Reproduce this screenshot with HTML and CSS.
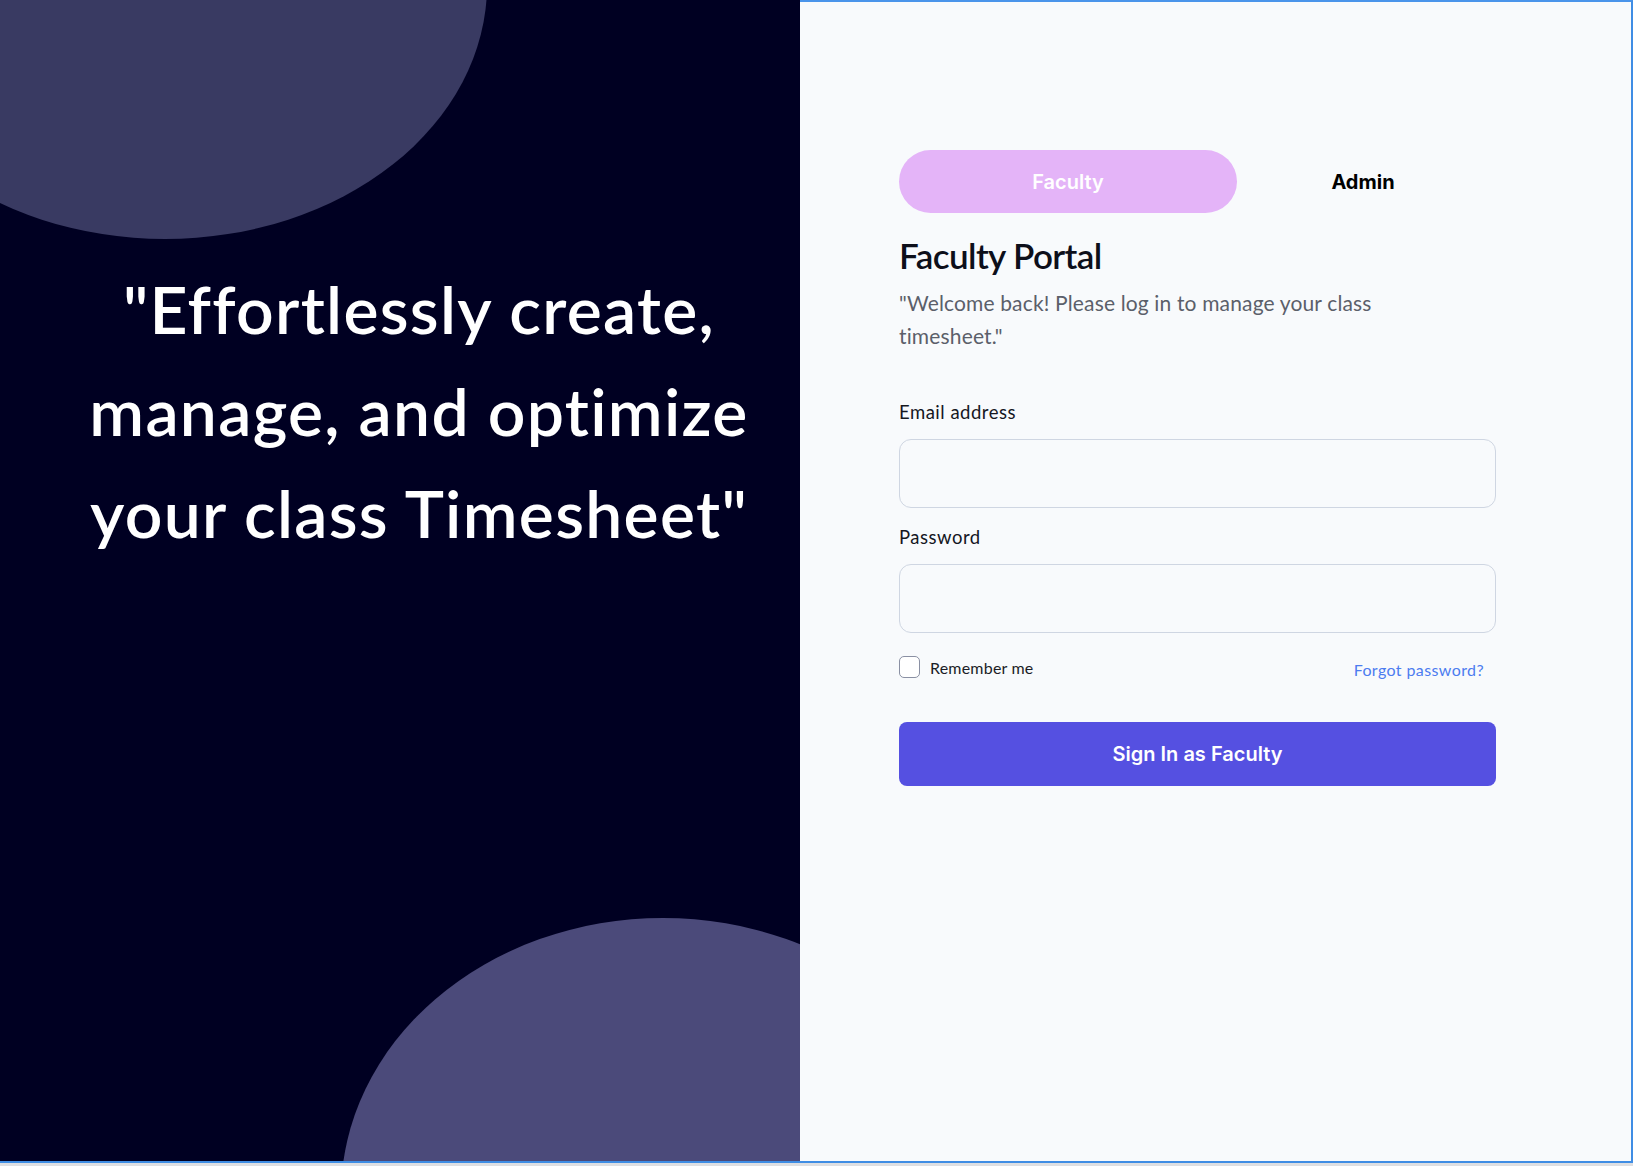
FILE: index.html
```html
<!DOCTYPE html>
<html lang="en">
<head>
<meta charset="utf-8">
<title>Faculty Portal</title>
<link rel="stylesheet" href="styles.css">
</head>
<body>
<div class="page">
  <section class="hero">
    <div class="blob blob-top"></div>
    <div class="blob blob-bottom"></div>
    <h1 class="hero-quote">"Effortlessly create,<br>manage, and optimize<br>your class Timesheet"</h1>
  </section>
  <main class="auth">
    <div class="auth-card">
      <div class="tabs">
        <button class="tab tab-active" type="button">Faculty</button>
        <button class="tab" type="button">Admin</button>
      </div>
      <h2 class="title">Faculty Portal</h2>
      <p class="lead">"Welcome back! Please log in to manage your class timesheet."</p>
      <form class="form">
        <label class="field-label" for="email">Email address</label>
        <input class="field-input" id="email" type="email">
        <label class="field-label" for="password">Password</label>
        <input class="field-input" id="password" type="password">
        <div class="row">
          <label class="remember"><span class="check"></span>Remember me</label>
          <a class="forgot" href="#">Forgot password?</a>
        </div>
        <button class="submit" type="button">Sign In as Faculty</button>
      </form>
    </div>
  </main>
</div>
</body>
</html>
```
FILE: styles.css
```css
html, body {
  margin: 0;
  padding: 0;
}
body {
  background: #dedfe2;
  width: 1633px;
  height: 1166px;
  overflow: hidden;
}
.page {
  display: flex;
  width: 1633px;
  height: 1161px;
  border-bottom: 2px solid #3f8de4;
}
.hero {
  position: relative;
  overflow: hidden;
  width: 800px;
  flex: none;
  background: #000022;
  display: flex;
  flex-direction: column;
  align-items: center;
  padding-left: 38px;
  box-sizing: border-box;
}
.blob {
  position: absolute;
  border-radius: 50%;
}
.blob-top {
  left: -157px;
  top: -269px;
  width: 644px;
  height: 508px;
  background: #393a62;
}
.blob-bottom {
  left: 341px;
  top: 918px;
  width: 644px;
  height: 554px;
  background: #4b4a7a;
}
.hero-quote {
  position: relative;
  margin: 258px 0 0;
  font-family: "Lato", "Open Sans", sans-serif;
  font-weight: 600;
  font-size: 66px;
  line-height: 102px;
  color: #ffffff;
  text-align: center;
  letter-spacing: 1.3px;
  white-space: nowrap;
}
.auth {
  flex: 1;
  background: #f8fafc;
  border-top: 2px solid #4a94ea;
  border-right: 2px solid #3f8de4;
  padding: 148px 0 0 99px;
  box-sizing: border-box;
}
.auth-card {
  width: 597px;
  display: flex;
  flex-direction: column;
}
.tabs {
  display: flex;
  height: 63px;
}
.tab {
  border: 0;
  background: transparent;
  font-family: "Inter", "Roboto", sans-serif;
  font-size: 20px;
  font-weight: 600;
  color: #000000;
  padding: 0;
  cursor: pointer;
}
.tab-active {
  width: 338px;
  border-radius: 32px;
  background: #e4b4f8;
  color: #ffffff;
}
.tab + .tab {
  width: 252px;
  font-weight: 700;
}
.title {
  margin: 22px 0 0;
  font-family: "Lato", sans-serif;
  font-weight: 600;
  font-size: 35px;
  line-height: 40px;
  letter-spacing: -0.6px;
  color: #0d0f1a;
}
.lead {
  margin: 11px 0 0;
  max-width: 520px;
  font-family: "Lato", sans-serif;
  font-size: 21px;
  line-height: 33px;
  letter-spacing: 0.15px;
  color: #5b5f6a;
}
.form {
  display: flex;
  flex-direction: column;
  margin-top: 49px;
}
.field-label {
  font-family: "Lato", sans-serif;
  font-size: 18.5px;
  line-height: 22px;
  letter-spacing: 0.5px;
  color: #15171f;
}
.field-input {
  margin: 16px 0 18px;
  height: 69px;
  box-sizing: border-box;
  border: 1px solid #cfd6e2;
  border-radius: 12px;
  background: #f8fafc;
  font-size: 18px;
  padding: 0 16px;
}
.row {
  display: flex;
  justify-content: space-between;
  align-items: center;
  margin-top: 4px;
  height: 24px;
}
.remember {
  display: flex;
  align-items: center;
  gap: 10px;
  font-family: "Lato", sans-serif;
  font-size: 16px;
  letter-spacing: 0.2px;
  color: #1b1d26;
}
.check {
  width: 19px;
  height: 20px;
  border: 1.5px solid #8a90a3;
  border-radius: 5px;
  background: #ffffff;
}
.forgot {
  font-family: "Lato", sans-serif;
  font-size: 16px;
  letter-spacing: 0.4px;
  color: #4c7cf0;
  text-decoration: none;
  margin-right: 12px;
  margin-top: 4px;
}
.submit {
  margin-top: 43px;
  height: 64px;
  border: 0;
  border-radius: 8px;
  background: #5550e1;
  color: #ffffff;
  font-family: "Inter", "Roboto", sans-serif;
  font-size: 20px;
  font-weight: 600;
  cursor: pointer;
}
```
